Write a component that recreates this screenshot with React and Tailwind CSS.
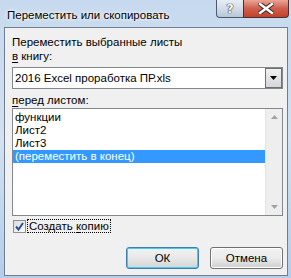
import React from "react";

const items = ["функции", "Лист2", "Лист3", "(переместить в конец)"];

function TitleButtons() {
  return (
    <div className="flex items-start">
      <div className="w-[27px] h-[18px] rounded-bl-[4px] border border-t-0 border-r-0 border-[#4c5a6c] bg-gradient-to-b from-[#e6edf5] via-[#d3dde9] to-[#b7c6d8] flex items-center justify-center">
        <span className="text-[13px] leading-none font-bold text-white [text-shadow:0_0_1px_#000,0_0_1px_#000] [font-family:'DejaVu_Sans',sans-serif]">?</span>
      </div>
      <div className="w-[46px] h-[18px] rounded-br-[4px] border border-t-0 border-[#4c3030] bg-gradient-to-b from-[#e8a596] via-[#cf5e4c] to-[#c4402b] flex items-center justify-center">
        <svg width="16" height="11" viewBox="0 0 16 11">
          <path d="M2 1 L14 10 M14 1 L2 10" stroke="#3a2a2a" strokeWidth="4.5" strokeLinecap="square" />
          <path d="M2 1 L14 10 M14 1 L2 10" stroke="#ffffff" strokeWidth="2.5" strokeLinecap="square" />
        </svg>
      </div>
    </div>
  );
}

export default function App() {
  return (
    <div className="w-[291px] h-[278px] overflow-hidden flex flex-col bg-gradient-to-b from-[#c6d9ee] via-[#d3e1f0] to-[#b3cdea] text-[11.5px] leading-[13px] text-black [font-family:'Liberation_Sans',Arial,sans-serif]">
      {/* title bar */}
      <div className="h-[27px] flex items-start justify-between pr-[2px]">
        <div className="pl-[7px] pt-[8px] text-[11.5px] leading-[14px] [text-shadow:0_0_6px_#ffffff,0_0_3px_#ffffff]">
          Переместить или скопировать
        </div>
        <TitleButtons />
      </div>

      {/* client area */}
      <div className="ml-[4px] w-[284px] h-[249px] border border-[#6f7f91] bg-[#f0f0f0] pl-[7px] pr-[3px] flex flex-col">
        <div className="mt-[8px] h-[13px]">Переместить выбранные листы</div>
        <div className="mt-[1px] h-[13px]">
          <span className="underline underline-offset-[2px]">в</span> книгу:
        </div>

        {/* combo box */}
        <div className="mt-[4px] h-[22px] w-[271px] border border-[#828790] bg-white flex items-center">
          <div className="flex-1 pl-[2px]">2016 Excel проработка ПР.xls</div>
          <div className="w-[17px] h-[20px] border border-[#707070] bg-gradient-to-b from-[#f2f2f2] to-[#d6d6d6] flex items-center justify-center">
            <svg width="7" height="4" viewBox="0 0 7 4">
              <path d="M0 0 H7 L3.5 4 Z" fill="#000" />
            </svg>
          </div>
        </div>

        <div className="mt-[5px] h-[13px]">
          <span className="underline underline-offset-[2px]">п</span>еред листом:
        </div>

        {/* list box */}
        <div className="mt-[1px] h-[108px] w-[271px] border border-[#828790] bg-white flex">
          <div className="flex-1 pt-[2px]">
            {items.map((t, i) => (
              <div
                key={t}
                className={
                  i === 3
                    ? "h-[13px] pl-[2px] bg-[#3399ff] text-white"
                    : "h-[13px] pl-[2px]"
                }
              >
                {t}
              </div>
            ))}
          </div>
          <div className="w-[17px] bg-[#eeeeee] border-l border-[#e4e4e4] flex flex-col items-center justify-between py-[6px]">
            <svg width="7" height="4" viewBox="0 0 7 4">
              <path d="M0 4 H7 L3.5 0 Z" fill="#a3a3a3" />
            </svg>
            <svg width="7" height="4" viewBox="0 0 7 4">
              <path d="M0 0 H7 L3.5 4 Z" fill="#a3a3a3" />
            </svg>
          </div>
        </div>

        {/* checkbox */}
        <div className="mt-[3px] h-[14px] flex items-center">
          <div className="ml-[1px] w-[13px] h-[13px] border border-[#8e8f8f] bg-gradient-to-br from-[#dcdcdc] to-[#fafafa] flex items-center justify-center">
            <svg width="9" height="9" viewBox="0 0 9 9">
              <path d="M1 4.5 L3.5 7.5 L8 1" stroke="#2a4d93" strokeWidth="2" fill="none" />
            </svg>
          </div>
          <div className="ml-[1px] h-[14px] px-[1px] border border-dotted border-black leading-[12px]">
            Создать <span className="underline underline-offset-[2px]">к</span>опию
          </div>
        </div>

        {/* buttons */}
        <div className="mt-[14px] flex justify-end gap-[11px] pr-[1px]">
          <button className="w-[73px] h-[22px] rounded-[3px] border border-[#3c7fb1] bg-gradient-to-b from-[#f2f2f2] via-[#e8e8e8] to-[#d4d4d4] shadow-[inset_0_0_0_1px_#48c8f4] leading-[12px]">
            ОК
          </button>
          <button className="w-[73px] h-[22px] rounded-[3px] border border-[#707070] bg-gradient-to-b from-[#f2f2f2] via-[#ebebeb] to-[#cfcfcf] shadow-[inset_0_0_0_1px_#ffffff] leading-[12px]">
            Отмена
          </button>
        </div>
      </div>
    </div>
  );
}
